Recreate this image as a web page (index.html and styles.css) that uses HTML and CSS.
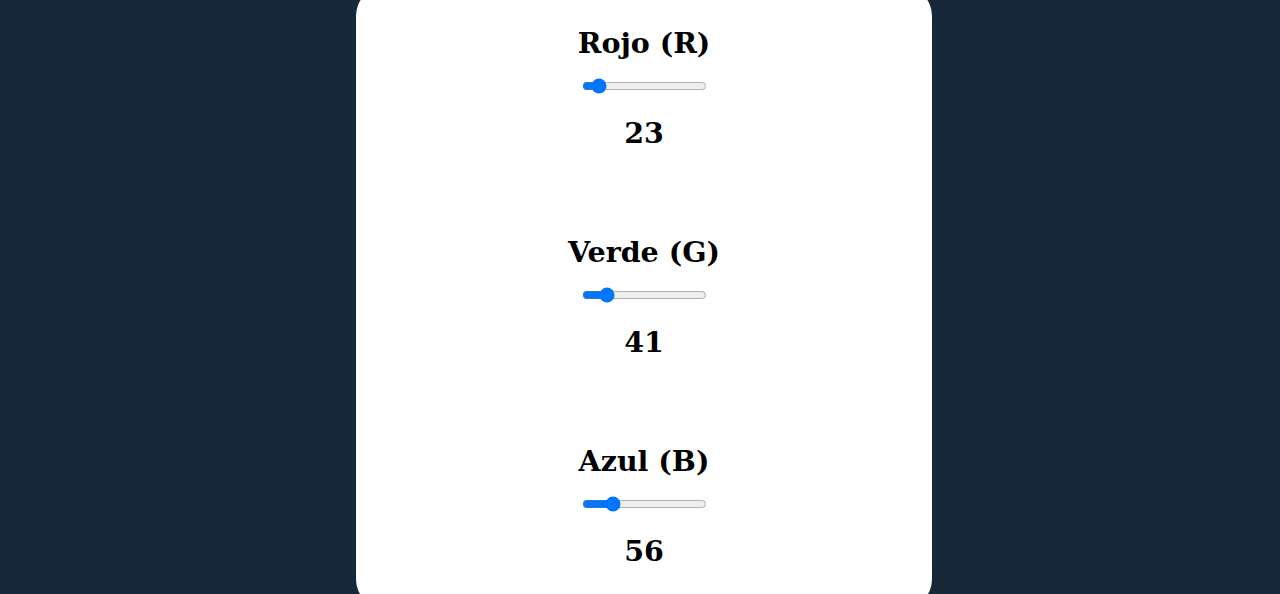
FILE: index.html
```html
<!DOCTYPE html>
<html lang="es">
  <head>
    <meta charset="UTF-8" />
    <meta name="viewport" content="width=device-width, initial-scale=1.0" />
    <title>Colores RGB</title>
    <link rel="stylesheet" href="styles.css">
  </head>
  <body>
    <div class="card">
      <div class="channel">
        <h2 class="channel-name">Rojo (R)</h2>
        <input type="range" class="slider" id="red" min="0" max="255" value="23" />
        <h2 class="channel-value" id="redValue">23</h2>
      </div>
      <div class="channel">
        <h2 class="channel-name">Verde (G)</h2>
        <input type="range" class="slider" id="green" min="0" max="255" value="41" />
        <h2 class="channel-value" id="greenValue">41</h2>
      </div>
      <div class="channel">
        <h2 class="channel-name">Azul (B)</h2>
        <input type="range" class="slider" id="blue" min="0" max="255" value="56" />
        <h2 class="channel-value" id="blueValue">56</h2>
      </div>
    </div>
  </body>
</html>
```

FILE: styles.css
```css
body {
  font-family: "DejaVu Serif", "Liberation Serif", serif;
  margin: 0;
  padding-left: 8px;
  height: 100vh;
  display: flex;
  justify-content: center;
  align-items: center;
  background-color: rgb(23, 41, 56);
}

.card {
  width: 576px;
  padding: 40px 0 41px;
  background-color: #ffffff;
  border-radius: 30px;
  display: flex;
  flex-direction: column;
  gap: 85px;
}

.channel {
  display: flex;
  flex-direction: column;
  align-items: center;
  gap: 16px;
}

.channel-name,
.channel-value {
  margin: 0;
  font-size: 28.5px;
  line-height: 34px;
  font-weight: bold;
  color: #000;
}

.channel-value {
  margin-top: 4px;
}

.slider {
  width: 125px;
  margin: 2px;
}
```
